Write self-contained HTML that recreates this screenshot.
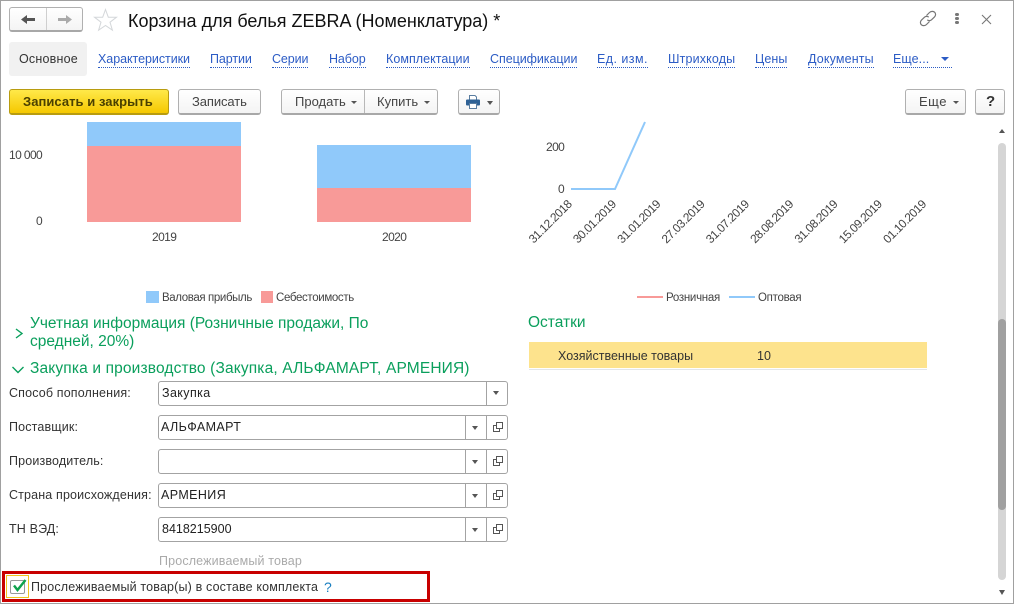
<!DOCTYPE html>
<html lang="ru"><head><meta charset="utf-8"><title>Корзина</title>
<style>
html,body{margin:0;padding:0;background:#fff}
#p{position:relative;width:1014px;height:604px;overflow:hidden;background:#fff;font-family:"Liberation Sans",sans-serif;font-size:12.5px;color:#333}
#p div,#p span.t,#p svg{position:absolute}
.t{position:absolute;white-space:nowrap;line-height:14px}
.l{color:#2c5cc5;border-bottom:1px dotted #2c5cc5;line-height:14px;height:15px;top:52px;letter-spacing:-.05px}
.b{box-sizing:border-box;border:1px solid #b0b0b0;border-bottom:2px solid #a8a8a8;border-radius:3px;background:linear-gradient(#fff,#f4f4f4);height:26px;top:89px}
.bt{font-size:13px;color:#444;top:95px}
.g{color:#0a9f5c;font-size:15.5px;line-height:18px}
.f{box-sizing:border-box;left:158px;width:350px;height:25px;border:1px solid #a3a3a3;border-radius:3px;background:#fff}
.s{width:1px;background:#a3a3a3;height:23px;top:0}
.lb{left:9px;letter-spacing:.15px}
.v{position:absolute;left:2px;top:4px;font-size:12.5px;line-height:14px;white-space:nowrap;letter-spacing:.4px;color:#222}
.tri{width:0;height:0;border-left:3.5px solid transparent;border-right:3.5px solid transparent;border-top:4px solid #555}
.dl{font-size:12px;color:#444;letter-spacing:-.6px}
.lg{font-size:11.5px;color:#444;letter-spacing:-.35px}
</style></head><body>
<div id="p">
<!-- window frame -->
<div style="left:0;top:0;width:1014px;height:1px;background:#a0a0a0"></div>
<div style="left:0;top:0;width:1px;height:604px;background:#a0a0a0"></div>
<div style="left:1013px;top:0;width:1px;height:604px;background:#a0a0a0"></div>
<div style="left:0;top:603px;width:1014px;height:1px;background:#a0a0a0"></div>

<!-- nav buttons -->
<div class="b" style="left:9px;top:7px;width:74px;height:25px"></div>
<div style="left:46px;top:8px;width:1px;height:22px;background:#cfcfcf"></div>
<svg style="left:20px;top:13px" width="16" height="13"><path d="M1 6.500L7 2V5H15V8H7V11Z" fill="#555"/></svg>
<svg style="left:57px;top:13px" width="16" height="13"><path d="M15 6.500L9 2V5H1V8H9V11Z" fill="#aaa"/></svg>
<svg style="left:93px;top:8px" width="25" height="24"><path d="M12.500 1.500L15.300 9.200H23.500L17 14.200L19.400 22.200L12.500 17.500L5.600 22.200L8 14.200L1.500 9.200H9.700Z" fill="#fff" stroke="#d4d7da" stroke-width="1"/></svg>
<span class="t" style="left:128px;top:11px;font-size:18px;line-height:20px;color:#111">Корзина для белья ZEBRA (Номенклатура) *</span>

<!-- window icons -->
<svg style="left:919px;top:10px" width="18" height="17" fill="none" stroke="#777" stroke-width="1.200"><path d="M7.500 5.500L10.500 2.500C12 1 14.500 1 15.700 2.300C17 3.600 16.800 5.600 15.500 6.900L12.500 9.800C11.200 11 9.300 10.800 8.300 9.800"/><path d="M10.500 11.500L7.500 14.500C6 16 3.500 16 2.300 14.700C1 13.400 1.200 11.400 2.500 10.100L5.500 7.200C6.800 6 8.700 6.200 9.700 7.200"/></svg>
<div style="left:955px;top:13px;width:4px;height:3px;background:#777;border-radius:2px"></div>
<div style="left:955px;top:17px;width:4px;height:3px;background:#777;border-radius:2px"></div>
<div style="left:955px;top:21px;width:4px;height:3px;background:#777;border-radius:2px"></div>
<svg style="left:981px;top:14px" width="11" height="11" stroke="#777" stroke-width="1.100"><path d="M1 1L10 10M10 1L1 10"/></svg>

<!-- tabs -->
<div style="left:9px;top:42px;width:78px;height:34px;background:#f1f1f1;border-radius:3px"></div>
<span class="t" style="left:19px;top:52px;letter-spacing:.2px;color:#333">Основное</span>
<span class="t l" style="left:98px">Характеристики</span>
<span class="t l" style="left:210px;letter-spacing:-.1px">Партии</span>
<span class="t l" style="left:272px;letter-spacing:-.1px">Серии</span>
<span class="t l" style="left:329px;letter-spacing:-.1px">Набор</span>
<span class="t l" style="left:386px;letter-spacing:.04px">Комплектации</span>
<span class="t l" style="left:490px">Спецификации</span>
<span class="t l" style="left:597px;letter-spacing:.45px">Ед. изм.</span>
<span class="t l" style="left:668px;letter-spacing:.15px">Штрихкоды</span>
<span class="t l" style="left:755px;letter-spacing:.08px">Цены</span>
<span class="t l" style="left:808px;letter-spacing:.15px">Документы</span>
<span class="t l" style="left:893px;width:59px;letter-spacing:.08px">Еще...</span>
<div style="left:941px;top:57px;width:0;height:0;border-left:4px solid transparent;border-right:4px solid transparent;border-top:4px solid #2c5cc5"></div>

<!-- toolbar -->
<div class="b" style="left:9px;width:160px;background:linear-gradient(#ffe94a,#f5c800);border-color:#b89c10"></div>
<span class="t" style="left:23px;top:95px;font-weight:bold;font-size:13px;color:#4a4000;letter-spacing:.05px">Записать и закрыть</span>
<div class="b" style="left:178px;width:83px"></div>
<span class="t bt" style="left:192px;letter-spacing:-.1px">Записать</span>
<div class="b" style="left:281px;width:157px"></div>
<div style="left:364px;top:90px;width:1px;height:23px;background:#b8b8b8"></div>
<span class="t bt" style="left:295px">Продать</span>
<div class="tri" style="left:351px;top:101px;border-top-width:3px"></div>
<span class="t bt" style="left:377px">Купить</span>
<div class="tri" style="left:424px;top:101px;border-top-width:3px"></div>
<div class="b" style="left:458px;width:42px"></div>
<svg style="left:465px;top:94px" width="16" height="16"><path d="M4.500 6V1.500H10L11.500 3V6" fill="#fff" stroke="#5a7da0"/><rect x="1" y="5.500" width="14" height="6" rx="1" fill="#2f6296"/><rect x="4.500" y="9.500" width="7" height="5" fill="#fff" stroke="#5a7da0"/></svg>
<div class="tri" style="left:487px;top:101px"></div>
<div class="b" style="left:905px;width:61px"></div>
<span class="t bt" style="left:919px;letter-spacing:.5px">Еще</span>
<div class="tri" style="left:953px;top:101px;border-top-width:3px"></div>
<div class="b" style="left:975px;width:30px"></div>
<span class="t" style="left:986px;top:95px;font-weight:bold;font-size:15px;color:#333">?</span>

<!-- bar chart -->
<span class="t dl" style="left:9px;top:148px">10 000</span>
<span class="t dl" style="left:36px;top:214px">0</span>
<div style="left:87px;top:122px;width:154px;height:24px;background:#90c9fa"></div>
<div style="left:87px;top:146px;width:154px;height:76px;background:#f89a98"></div>
<div style="left:317px;top:145px;width:154px;height:43px;background:#90c9fa"></div>
<div style="left:317px;top:188px;width:154px;height:34px;background:#f89a98"></div>
<span class="t dl" style="left:152px;top:230px">2019</span>
<span class="t dl" style="left:382px;top:230px">2020</span>
<div style="left:146px;top:291px;width:13px;height:12px;background:#90c9fa"></div>
<span class="t lg" style="left:162px;top:291px;letter-spacing:-.38px">Валовая прибыль</span>
<div style="left:261px;top:291px;width:12px;height:12px;background:#f89a98"></div>
<span class="t lg" style="left:276px;top:291px">Себестоимость</span>

<!-- line chart -->
<span class="t dl" style="left:546px;top:140px">200</span>
<span class="t dl" style="left:558px;top:182px">0</span>
<svg style="left:560px;top:118px" width="100" height="80" fill="none" stroke="#90c9fa" stroke-width="2"><path d="M11 71H55L85 4"/></svg>
<svg style="left:520px;top:190px;overflow:visible" width="430" height="60" font-family="Liberation Sans" font-size="12" letter-spacing="-.5" fill="#444">
<text transform="rotate(-45 52.500 15)" x="52.500" y="15" text-anchor="end">31.12.2018</text>
<text transform="rotate(-45 96.800 15)" x="96.800" y="15" text-anchor="end">30.01.2019</text>
<text transform="rotate(-45 141.100 15)" x="141.100" y="15" text-anchor="end">31.01.2019</text>
<text transform="rotate(-45 185.400 15)" x="185.400" y="15" text-anchor="end">27.03.2019</text>
<text transform="rotate(-45 229.700 15)" x="229.700" y="15" text-anchor="end">31.07.2019</text>
<text transform="rotate(-45 274 15)" x="274" y="15" text-anchor="end">28.08.2019</text>
<text transform="rotate(-45 318.300 15)" x="318.300" y="15" text-anchor="end">31.08.2019</text>
<text transform="rotate(-45 362.600 15)" x="362.600" y="15" text-anchor="end">15.09.2019</text>
<text transform="rotate(-45 406.900 15)" x="406.900" y="15" text-anchor="end">01.10.2019</text>
</svg>
<div style="left:637px;top:296px;width:26px;height:2px;background:#f89a98"></div>
<span class="t lg" style="left:666px;top:291px;letter-spacing:-.28px">Розничная</span>
<div style="left:729px;top:296px;width:26px;height:2px;background:#90c9fa"></div>
<span class="t lg" style="left:758px;top:291px;letter-spacing:-.28px">Оптовая</span>

<!-- groups -->
<svg style="left:13px;top:326px" width="12" height="14" fill="none" stroke="#0a9f5c" stroke-width="1.400"><path d="M3 3L9 7.500L3 12"/></svg>
<span class="t g" style="left:30px;top:315px">Учетная информация (Розничные продажи, По</span>
<span class="t g" style="left:30px;top:333px">средней, 20%)</span>
<svg style="left:11px;top:365px" width="14" height="10" fill="none" stroke="#0a9f5c" stroke-width="1.400"><path d="M1.500 2L7 7.500L12.500 2"/></svg>
<span class="t g" style="left:30px;top:360px;letter-spacing:.15px">Закупка и производство (Закупка, АЛЬФАМАРТ, АРМЕНИЯ)</span>

<!-- fields -->
<span class="t lb" style="top:386px">Способ пополнения:</span>
<div class="f" style="top:381px"><span class="v" style="left:3px">Закупка</span><div class="s" style="left:327px"></div><div class="tri" style="left:334px;top:9px"></div></div>
<span class="t lb" style="top:420px">Поставщик:</span>
<div class="f" style="top:415px"><span class="v">АЛЬФАМАРТ</span><div class="s" style="left:306px"></div><div class="tri" style="left:313px;top:10px"></div><div class="s" style="left:327px"></div>
<svg style="left:334px;top:6px" width="11" height="11" fill="none" stroke="#555"><path d="M3.500 .5H9.500V6.500H3.500Z"/><path d="M3.500 3.500H.5V9.500H6.500V6.500"/></svg></div>
<span class="t lb" style="top:454px">Производитель:</span>
<div class="f" style="top:449px"><div class="s" style="left:306px"></div><div class="tri" style="left:313px;top:10px"></div><div class="s" style="left:327px"></div>
<svg style="left:334px;top:6px" width="11" height="11" fill="none" stroke="#555"><path d="M3.500 .5H9.500V6.500H3.500Z"/><path d="M3.500 3.500H.5V9.500H6.500V6.500"/></svg></div>
<span class="t lb" style="top:488px">Страна происхождения:</span>
<div class="f" style="top:483px"><span class="v">АРМЕНИЯ</span><div class="s" style="left:306px"></div><div class="tri" style="left:313px;top:10px"></div><div class="s" style="left:327px"></div>
<svg style="left:334px;top:6px" width="11" height="11" fill="none" stroke="#555"><path d="M3.500 .5H9.500V6.500H3.500Z"/><path d="M3.500 3.500H.5V9.500H6.500V6.500"/></svg></div>
<span class="t lb" style="top:522px">ТН ВЭД:</span>
<div class="f" style="top:517px"><span class="v" style="left:3px;letter-spacing:0">8418215900</span><div class="s" style="left:306px"></div><div class="tri" style="left:313px;top:10px"></div><div class="s" style="left:327px"></div>
<svg style="left:334px;top:6px" width="11" height="11" fill="none" stroke="#555"><path d="M3.500 .5H9.500V6.500H3.500Z"/><path d="M3.500 3.500H.5V9.500H6.500V6.500"/></svg></div>
<span class="t" style="left:159px;top:554px;color:#aaa;letter-spacing:.15px">Прослеживаемый товар</span>

<!-- highlight -->
<div style="box-sizing:border-box;left:2px;top:571px;width:428px;height:31px;border:3px solid #c80000"></div>
<div style="box-sizing:border-box;left:6px;top:575px;width:23px;height:23px;border:1px solid #f0c420"></div>
<div style="box-sizing:border-box;left:10px;top:580px;width:15px;height:14px;border:1px solid #999;border-radius:2px;background:#fff"></div>
<svg style="left:10px;top:576px" width="17" height="17" fill="none" stroke="#0fa34d" stroke-width="2.400"><path d="M4 9.500L7.500 14L15.500 4"/></svg>
<span class="t" style="left:31px;top:580px;letter-spacing:.16px;color:#333">Прослеживаемый товар(ы) в составе комплекта</span>
<span class="t" style="left:324px;top:580px;color:#1a7fc0;font-size:14px">?</span>

<!-- stock -->
<span class="t g" style="left:528px;top:314px">Остатки</span>
<div style="left:529px;top:342px;width:398px;height:26px;background:#fde38d"></div>
<div style="left:529px;top:369px;width:398px;height:1px;background:#e2e6ea"></div>
<span class="t" style="left:558px;top:349px">Хозяйственные товары</span>
<span class="t" style="left:757px;top:349px">10</span>

<!-- scrollbar -->
<div style="left:998px;top:143px;width:8px;height:437px;background:#d5d5d5;border-radius:4px"></div>
<div style="left:998px;top:319px;width:8px;height:191px;background:#a0a0a0;border-radius:4px"></div>
<div style="left:999px;top:129px;width:0;height:0;border-left:3px solid transparent;border-right:3px solid transparent;border-bottom:4px solid #555"></div>
<div style="left:999px;top:590px;width:0;height:0;border-left:3.500px solid transparent;border-right:3.500px solid transparent;border-top:5px solid #555"></div>
</div>
</body></html>
